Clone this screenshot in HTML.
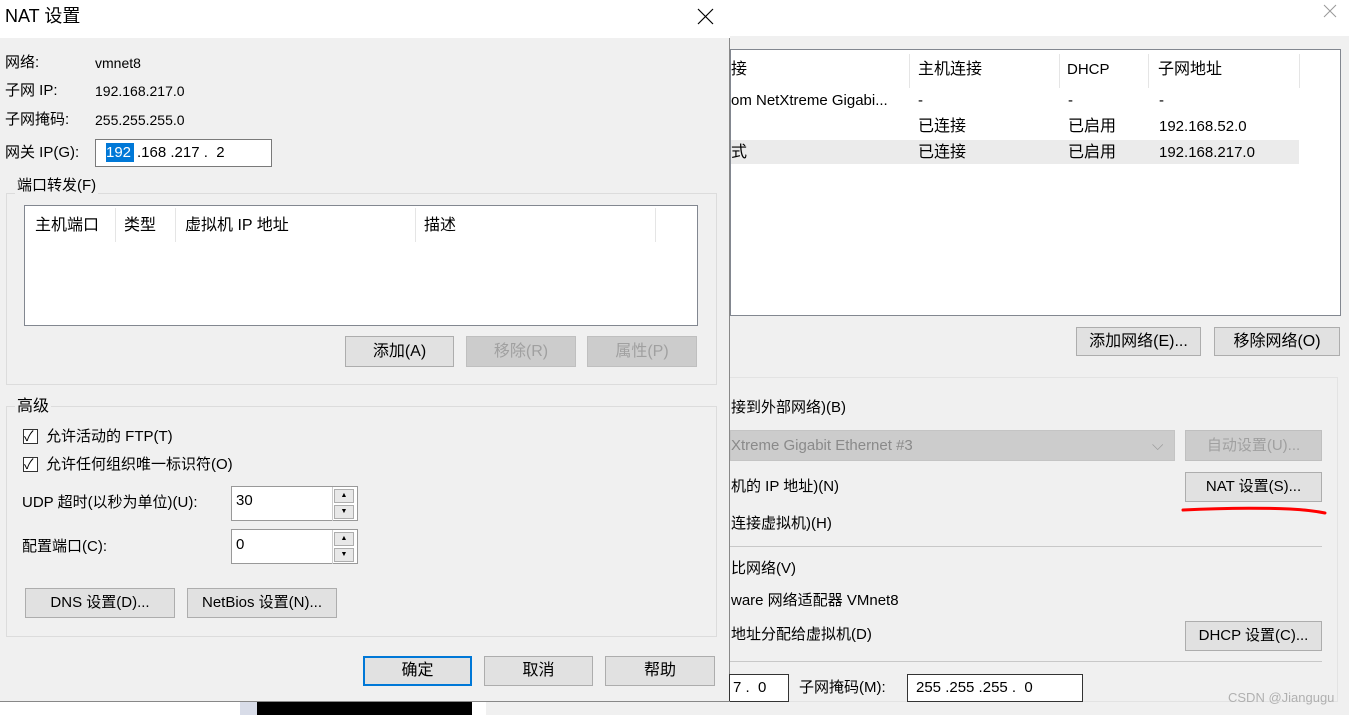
<!DOCTYPE html>
<html><head><meta charset="utf-8"><style>
*{margin:0;padding:0;box-sizing:border-box}
body{width:1349px;height:715px;overflow:hidden;background:#f0f0f0;position:relative;font-family:"Liberation Sans","Noto Sans CJK SC",sans-serif;font-size:15px;color:#000}
.a{position:absolute}
.t{position:absolute;white-space:nowrap;line-height:20px;height:20px}
.box{position:absolute;background:#fff;border:1px solid #7a7a7a}
.btn{position:absolute;background:#e1e1e1;border:1px solid #adadad;text-align:center;font-size:15px;white-space:nowrap}
.dis{background:#cccccc;border-color:#bfbfbf;color:#a0a0a0}
.grp{position:absolute;border:1px solid #dcdcdc}
.lbl{position:absolute;background:#f0f0f0;padding:0 2px;line-height:20px;white-space:nowrap}
.chk{position:absolute;width:15px;height:15px;border:1px solid #333;background:#fff}
.spin{position:absolute;width:23px;border-left:1px solid #ccc}
.spin div{height:14px;margin:2px 1px;background:#e8e8e8;border:1px solid #adadad;font-size:7px;line-height:12px;text-align:center}
</style></head><body>
<div class="a" style="left:730px;top:0;width:619px;height:36px;background:#fff"></div>
<svg class="a" style="left:1323px;top:4px" width="14" height="14"><path d="M1 1L13 13M13 1L1 13" stroke="#999" stroke-width="1"/></svg>
<div class="a" style="left:729px;top:36px;width:1px;height:666px;background:#888"></div>
<div class="box" style="left:730px;top:49px;width:611px;height:267px;border-color:#828790"></div>
<div class="a" style="left:909px;top:54px;width:1px;height:34px;background:#e5e5e5"></div>
<div class="a" style="left:1059px;top:54px;width:1px;height:34px;background:#e5e5e5"></div>
<div class="a" style="left:1148px;top:54px;width:1px;height:34px;background:#e5e5e5"></div>
<div class="a" style="left:1299px;top:54px;width:1px;height:34px;background:#e5e5e5"></div>
<div class="a" style="left:731px;top:140px;width:568px;height:24px;background:#ebebeb"></div>
<div class="t" style="left:731px;top:60px;font-size:16px">接</div>
<div class="t" style="left:918px;top:60px;font-size:16px">主机连接</div>
<div class="t" style="left:1067px;top:60px">DHCP</div>
<div class="t" style="left:1158px;top:60px;font-size:16px">子网地址</div>
<div class="t" style="left:731px;top:91px">om NetXtreme Gigabi...</div>
<div class="t" style="left:918px;top:91px">-</div><div class="t" style="left:1068px;top:91px">-</div><div class="t" style="left:1159px;top:91px">-</div>
<div class="t" style="left:918px;top:117px;font-size:16px">已连接</div><div class="t" style="left:1068px;top:117px;font-size:16px">已启用</div><div class="t" style="left:1159px;top:117px">192.168.52.0</div>
<div class="t" style="left:731px;top:143px;font-size:16px">式</div>
<div class="t" style="left:918px;top:143px;font-size:16px">已连接</div><div class="t" style="left:1068px;top:143px;font-size:16px">已启用</div><div class="t" style="left:1159px;top:143px">192.168.217.0</div>
<div class="btn" style="left:1076px;top:327px;width:125px;height:29px;line-height:27px;font-size:16px">添加网络(E)...</div>
<div class="btn" style="left:1214px;top:327px;width:126px;height:29px;line-height:27px;font-size:16px">移除网络(O)</div>
<div class="a" style="left:730px;top:377px;width:608px;height:325px;border:1px solid #e3e3e3;border-left:none"></div>
<div class="t" style="left:731px;top:398px">接到外部网络)(B)</div>
<div class="a" style="left:730px;top:430px;width:445px;height:31px;background:#cccccc;border:1px solid #c4c4c4"></div>
<div class="t" style="left:731px;top:436px;color:#8a8a8a">Xtreme Gigabit Ethernet #3</div>
<div class="t" style="left:1152px;top:436px;color:#999">⌵</div>
<div class="btn dis" style="left:1185px;top:430px;width:137px;height:31px;line-height:29px">自动设置(U)...</div>
<div class="t" style="left:731px;top:477px">机的 IP 地址)(N)</div>
<div class="btn" style="left:1185px;top:472px;width:137px;height:30px;line-height:28px">NAT 设置(S)...</div>
<svg class="a" style="left:1180px;top:504px" width="150" height="14"><path d="M3 6 Q60 3 110 5 Q130 6 145 9" stroke="#f00" stroke-width="3" fill="none" stroke-linecap="round"/></svg>
<div class="t" style="left:731px;top:514px">连接虚拟机)(H)</div>
<div class="a" style="left:730px;top:546px;width:592px;height:1px;background:#c8c8c8"></div>
<div class="t" style="left:731px;top:559px">比网络(V)</div>
<div class="t" style="left:731px;top:591px">ware 网络适配器 VMnet8</div>
<div class="t" style="left:731px;top:625px">地址分配给虚拟机(D)</div>
<div class="btn" style="left:1185px;top:621px;width:137px;height:30px;line-height:28px">DHCP 设置(C)...</div>
<div class="a" style="left:730px;top:661px;width:592px;height:1px;background:#c8c8c8"></div>
<div class="box" style="left:729px;top:674px;width:60px;height:28px;border-color:#333"></div>
<div class="t" style="left:733px;top:678px">7 .&nbsp; 0</div>
<div class="t" style="left:799px;top:678px">子网掩码(M):</div>
<div class="box" style="left:907px;top:674px;width:176px;height:28px;border-color:#333"></div>
<div class="t" style="left:916px;top:678px">255 .255 .255 .&nbsp; 0</div>
<div class="t" style="left:1228px;top:688px;font-size:13px;color:#b0b0b0">CSDN @Jiangugu</div>
<div class="a" style="left:0;top:702px;width:730px;height:13px;background:#fff"></div>
<div class="a" style="left:240px;top:702px;width:17px;height:13px;background:#d8dce8"></div>
<div class="a" style="left:257px;top:702px;width:215px;height:13px;background:#000"></div>
<div class="a" style="left:486px;top:702px;width:244px;height:13px;background:#f0f0f0"></div>
<div class="a" style="left:0;top:701px;width:730px;height:1px;background:#888"></div>
<div class="a" style="left:0;top:0;width:730px;height:38px;background:#fff"></div>
<div class="t" style="left:5px;top:5px;font-size:18px;line-height:22px">NAT 设置</div>
<svg class="a" style="left:697px;top:8px" width="17" height="17"><path d="M1 1L16 16M16 1L1 16" stroke="#000" stroke-width="1.2"/></svg>
<div class="t" style="left:5px;top:53px">网络:</div><div class="t" style="left:95px;top:53px;font-size:14px">vmnet8</div>
<div class="t" style="left:5px;top:81px">子网 IP:</div><div class="t" style="left:95px;top:81px;font-size:14px">192.168.217.0</div>
<div class="t" style="left:5px;top:110px">子网掩码:</div><div class="t" style="left:95px;top:110px;font-size:14px">255.255.255.0</div>
<div class="t" style="left:5px;top:143px">网关 IP(G):</div>
<div class="box" style="left:95px;top:139px;width:177px;height:28px"></div>
<div class="a" style="left:106px;top:143px;width:28px;height:19px;background:#0078d7"></div>
<div class="t" style="left:106px;top:143px;color:#fff">192</div>
<div class="t" style="left:137px;top:143px">.168 .217 .&nbsp; 2</div>
<div class="grp" style="left:6px;top:193px;width:711px;height:192px"></div>
<div class="lbl" style="left:15px;top:176px">端口转发(F)</div>
<div class="box" style="left:24px;top:205px;width:674px;height:121px;border-color:#828790"></div>
<div class="a" style="left:115px;top:208px;width:1px;height:34px;background:#e5e5e5"></div>
<div class="a" style="left:175px;top:208px;width:1px;height:34px;background:#e5e5e5"></div>
<div class="a" style="left:415px;top:208px;width:1px;height:34px;background:#e5e5e5"></div>
<div class="a" style="left:655px;top:208px;width:1px;height:34px;background:#e5e5e5"></div>
<div class="t" style="left:35px;top:216px;font-size:16px">主机端口</div>
<div class="t" style="left:124px;top:216px;font-size:16px">类型</div>
<div class="t" style="left:185px;top:216px;font-size:16px">虚拟机 IP 地址</div>
<div class="t" style="left:424px;top:216px;font-size:16px">描述</div>
<div class="btn" style="left:345px;top:336px;width:109px;height:31px;line-height:29px;font-size:16px">添加(A)</div>
<div class="btn dis" style="left:466px;top:336px;width:110px;height:31px;line-height:29px;font-size:16px">移除(R)</div>
<div class="btn dis" style="left:587px;top:336px;width:110px;height:31px;line-height:29px;font-size:16px">属性(P)</div>
<div class="grp" style="left:6px;top:406px;width:711px;height:231px"></div>
<div class="lbl" style="left:15px;top:397px;font-size:16px">高级</div>
<div class="chk" style="left:23px;top:429px"></div><div class="t" style="left:24px;top:426px;font-size:14px">✓</div>
<div class="t" style="left:46px;top:427px">允许活动的 FTP(T)</div>
<div class="chk" style="left:23px;top:457px"></div><div class="t" style="left:24px;top:454px;font-size:14px">✓</div>
<div class="t" style="left:46px;top:455px">允许任何组织唯一标识符(O)</div>
<div class="t" style="left:22px;top:493px">UDP 超时(以秒为单位)(U):</div>
<div class="box" style="left:231px;top:486px;width:127px;height:35px;border-color:#999"></div>
<div class="t" style="left:236px;top:491px">30</div>
<div class="spin" style="left:332px;top:487px"><div>▲</div><div>▼</div></div>
<div class="t" style="left:22px;top:537px">配置端口(C):</div>
<div class="box" style="left:231px;top:529px;width:127px;height:35px;border-color:#999"></div>
<div class="t" style="left:236px;top:535px">0</div>
<div class="spin" style="left:332px;top:530px"><div>▲</div><div>▼</div></div>
<div class="btn" style="left:25px;top:588px;width:150px;height:30px;line-height:28px">DNS 设置(D)...</div>
<div class="btn" style="left:187px;top:588px;width:150px;height:30px;line-height:28px">NetBios 设置(N)...</div>
<div class="btn" style="left:363px;top:656px;width:109px;height:30px;line-height:26px;border:2px solid #0078d7;font-size:16px">确定</div>
<div class="btn" style="left:484px;top:656px;width:109px;height:30px;line-height:28px;font-size:16px">取消</div>
<div class="btn" style="left:605px;top:656px;width:110px;height:30px;line-height:28px;font-size:16px">帮助</div>
</body></html>
